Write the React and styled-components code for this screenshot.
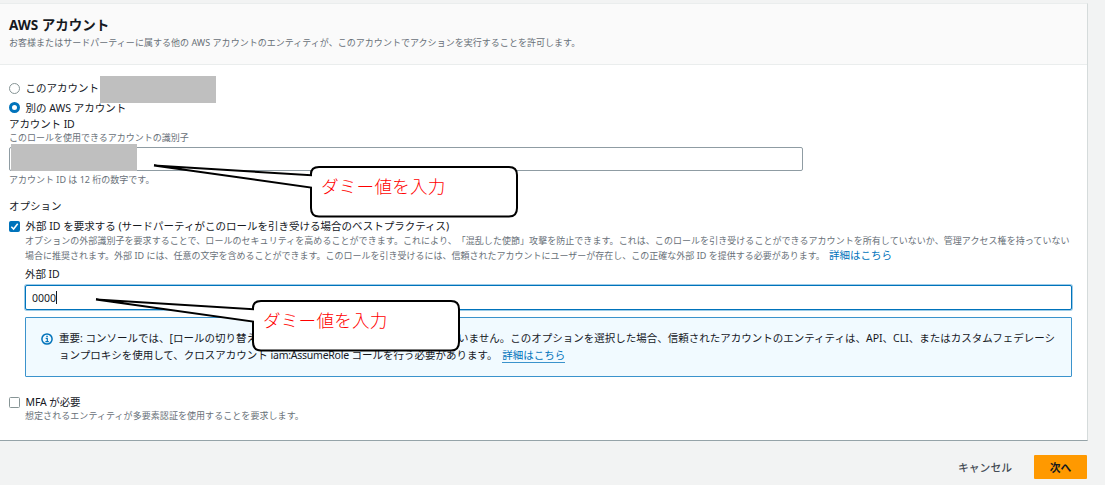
import React from "react";
import styled, { createGlobalStyle } from "styled-components";

const Global = createGlobalStyle`
  * { box-sizing: border-box; }
  body {
    margin: 0;
    background: #f2f3f3;
    font-family: "Noto Sans", "Noto Sans CJK JP", sans-serif;
    color: #16191f;
    overflow: hidden;
    text-spacing-trim: space-all;
  }
`;

const Page = styled.div`
  position: relative;
  width: 1105px;
  height: 485px;
  padding-top: 3px;
  overflow: hidden;
`;

const Card = styled.section`
  width: 1088px;
  height: 438px;
  background: #fff;
  border-top: 1px solid #eaeded;
  border-right: 1px solid #d5dbdb;
  border-bottom: 1px solid #95a3a8;
`;

const CardHeader = styled.header`
  height: 61px;
  padding: 11px 9px 0;
  background: #fafafa;
  border-bottom: 1px solid #eaeded;
`;

const Title = styled.h2`
  margin: 0;
  height: 20px;
  line-height: 20px;
  font-size: 13.5px;
  font-weight: 700;
  white-space: nowrap;
`;

const CardBody = styled.div`
  padding: 13px 15px 0 9px;
`;

const Text = styled.div`
  height: ${(p) => p.$h || 14}px;
  line-height: ${(p) => p.$h || 14}px;
  margin-top: ${(p) => p.$mt || 0}px;
  font-size: ${(p) => (p.$small ? 9 : 10.5)}px;
  color: ${(p) => (p.$small ? "#687078" : "#16191f")};
  letter-spacing: ${(p) => p.$ls || 0}px;
  white-space: nowrap;
`;

const Choice = styled.label`
  display: flex;
  align-items: center;
  gap: 5.5px;
  height: ${(p) => p.$h}px;
  margin-top: ${(p) => p.$mt || 0}px;
`;

const Radio = styled.span`
  flex: none;
  width: 11px;
  height: 11px;
  border-radius: 50%;
  background: #fff;
  border: ${(p) => (p.$on ? "3.5px solid #0073bb" : "1px solid #879596")};
`;

const Box = styled.span`
  flex: none;
  display: flex;
  width: 11px;
  height: 11px;
  border-radius: 1.5px;
  background: ${(p) => (p.$on ? "#0073bb" : "#fff")};
  border: 1px solid ${(p) => (p.$on ? "#0073bb" : "#879596")};
`;

const Indent = styled.div`
  padding-left: 16px;
`;

const Field = styled.div`
  width: ${(p) => p.$w};
  height: ${(p) => (p.$focus ? 25 : 24)}px;
  margin-top: ${(p) => p.$mt}px;
  padding: 0 6px;
  display: flex;
  align-items: center;
  font-size: 10.5px;
  background: #fff;
  border: 1px solid ${(p) => (p.$focus ? "#0073bb" : "#8f9ca3")};
  border-radius: 2px;
  box-shadow: ${(p) => (p.$focus ? "0 0 0 1px #9ccbe8" : "none")};
`;

const Caret = styled.span`
  width: 1px;
  height: 13px;
  background: #16191f;
`;

const Link = styled.a`
  font-size: 10.5px;
  letter-spacing: 0;
  color: #0073bb;
  margin-left: 2px;
  border-bottom: ${(p) => (p.$underline ? "1px solid #3b93cc" : "none")};
`;

const Alert = styled.div`
  display: flex;
  gap: 6px;
  width: 1047px;
  height: 60px;
  margin-top: 7px;
  padding: 12px 0 0 15px;
  background: #f1faff;
  border: 1px solid #3b93cc;
  border-radius: 1px;
`;

const Term = styled.span`
  letter-spacing: -0.25px;
`;

const InfoSvg = styled.svg`
  flex: none;
  margin-top: 3px;
`;

const Footer = styled.footer`
  display: flex;
  justify-content: flex-end;
  align-items: center;
  gap: 22px;
  padding: 14px 18px 0 0;
`;

const Button = styled.button`
  width: ${(p) => (p.$primary ? "53px" : "auto")};
  height: 24px;
  padding: 0 0 1px;
  border: 0;
  border-radius: 1px;
  font-family: inherit;
  font-size: 10.8px;
  font-weight: ${(p) => (p.$primary ? 700 : 500)};
  color: ${(p) => (p.$primary ? "#16191f" : "#444b54")};
  background: ${(p) => (p.$primary ? "#ff9900" : "transparent")};
`;

const Redaction = styled.div`
  position: absolute;
  left: ${(p) => p.$x}px;
  top: ${(p) => p.$y}px;
  width: ${(p) => p.$w}px;
  height: 27px;
  background: #bfbfbf;
`;

const CalloutWrap = styled.div`
  position: absolute;
  left: ${(p) => p.$x}px;
  top: ${(p) => p.$y}px;
  width: 370px;
  height: 56px;
`;

const CalloutSvg = styled.svg`
  display: block;
`;

const CalloutText = styled.span`
  position: absolute;
  left: 171px;
  top: 12px;
  line-height: 24px;
  font-family: "Noto Sans CJK JP", sans-serif;
  font-size: 17.6px;
  letter-spacing: 0.2px;
  font-weight: 300;
  color: #ff0000;
  white-space: nowrap;
`;

function Callout({ x, y, children }) {
  return (
    <CalloutWrap $x={x} $y={y}>
      <CalloutSvg width="370" height="56" viewBox="0 0 370 56">
        <path
          d="M161 13.2 V12 Q161 5 169 5 H359 Q367 5 367 13 V46 Q367 54.5 359 54.5 H169 Q161 54.5 161 46 V25.5 L4 3.5 Z"
          fill="#fff"
          stroke="#000"
          strokeWidth="2"
        />
      </CalloutSvg>
      <CalloutText>{children}</CalloutText>
    </CalloutWrap>
  );
}

function Check() {
  return (
    <svg width="9" height="9" viewBox="0 0 9 9">
      <path d="M1.3 4.7 L3.6 7 L7.7 1.8" fill="none" stroke="#fff" strokeWidth="1.5" />
    </svg>
  );
}

function InfoIcon() {
  return (
    <InfoSvg width="12" height="12" viewBox="0 0 12 12" fill="none" stroke="#0073bb">
      <circle cx="6" cy="6" r="5.1" strokeWidth="1.5" />
      <path d="M4.7 5.3 H6.3 V8.6 M4.4 8.6 H7.8 M5.3 3.3 H6.8" strokeWidth="1.2" />
    </InfoSvg>
  );
}

export default function App() {
  return (
    <Page>
      <Global />
      <Card>
        <CardHeader>
          <Title>AWS アカウント</Title>
          <Text $small $h={16} $ls={0.03}>
            お客様またはサードパーティーに属する他の AWS アカウントのエンティティが、このアカウントでアクションを実行することを許可します。
          </Text>
        </CardHeader>
        <CardBody>
          <Choice $h={20}>
            <Radio />
            <Text>このアカウント</Text>
          </Choice>
          <Choice $h={19}>
            <Radio $on />
            <Text>別の AWS アカウント</Text>
          </Choice>
          <Text $ls={-0.1}>アカウント ID</Text>
          <Text $small>このロールを使用できるアカウントの識別子</Text>
          <Field $w="794px" $mt={2} />
          <Text $small $mt={2}>アカウント ID は 12 桁の数字です。</Text>
          <Text $h={16} $mt={11}>オプション</Text>
          <Choice $h={14} $mt={5}>
            <Box $on><Check /></Box>
            <Text>外部 ID を要求する (サードパーティがこのロールを引き受ける場合のベストプラクティス)</Text>
          </Choice>
          <Indent>
            <Text $small $h={15} $ls={0.048}>
              オプションの外部識別子を要求することで、ロールのセキュリティを高めることができます。これにより、「混乱した使節」攻撃を防止できます。これは、このロールを引き受けることができるアカウントを所有していないか、管理アクセス権を持っていない
            </Text>
            <Text $small $h={15}>
              場合に推奨されます。外部 ID には、任意の文字を含めることができます。このロールを引き受けるには、信頼されたアカウントにユーザーが存在し、この正確な外部 ID を提供する必要があります。 <Link>詳細はこちら</Link>
            </Text>
            <Text $mt={4} $ls={-0.1}>外部 ID</Text>
            <Field $focus $w="1047px" $mt={4}>
              0000
              <Caret />
            </Field>
            <Alert>
              <InfoIcon />
              <div>
                <Text $h={17}>
                  重要: コンソールでは、[ロールの切り替え] 機能での外部 ID の使用はサポートされていません。このオプションを選択した場合、信頼されたアカウントのエンティティは、API、CLI、またはカスタムフェデレーシ
                </Text>
                <Text $h={17}>
                  ョンプロキシを使用して、クロスアカウント <Term>iam:AssumeRole</Term> コールを行う必要があります。 <Link $underline>詳細はこちら</Link>
                </Text>
              </div>
            </Alert>
          </Indent>
          <Choice $h={14} $mt={18}>
            <Box />
            <Text $ls={-0.1}>MFA が必要</Text>
          </Choice>
          <Indent>
            <Text $small $ls={0.06}>想定されるエンティティが多要素認証を使用することを要求します。</Text>
          </Indent>
        </CardBody>
      </Card>
      <Footer>
        <Button>キャンセル</Button>
        <Button $primary>次へ</Button>
      </Footer>
      <Redaction $x={100} $y={76} $w={116} />
      <Redaction $x={11} $y={144} $w={126} />
      <Callout x={150} y={162}>ダミー値を入力</Callout>
      <Callout x={92} y={296}>ダミー値を入力</Callout>
    </Page>
  );
}
